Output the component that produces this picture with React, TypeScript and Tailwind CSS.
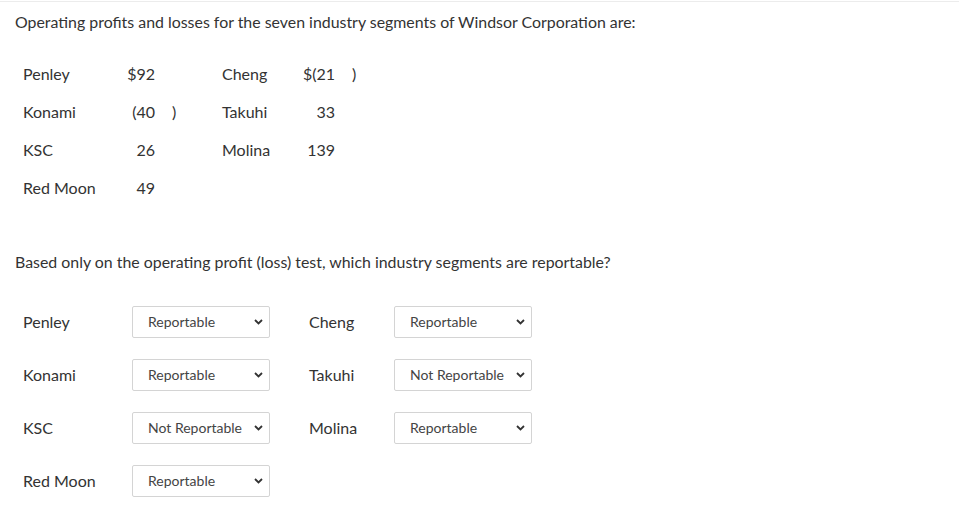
import React from 'react'

const font = { fontFamily: 'Lato, "Open Sans", sans-serif' }

type Row = { name: string; value: string; paren?: boolean }

const left: Row[] = [
  { name: 'Penley', value: '$92' },
  { name: 'Konami', value: '(40', paren: true },
  { name: 'KSC', value: '26' },
  { name: 'Red Moon', value: '49' },
]

const right: (Row | null)[] = [
  { name: 'Cheng', value: '$(21', paren: true },
  { name: 'Takuhi', value: '33' },
  { name: 'Molina', value: '139' },
  null,
]

function Chevron() {
  return (
    <svg className="w-[9px] h-[6px]" viewBox="0 0 9 6" fill="none">
      <path d="M1 1l3.5 3.5L8 1" stroke="#333" strokeWidth={1.8} />
    </svg>
  )
}

function FakeSelect({ value }: { value: string }) {
  return (
    <div className="relative w-[138px] h-[32px] border border-[#d4d4d4] rounded-[2px] bg-white flex items-center pl-[15px] pb-px text-[14px] text-[#444]">
      <span>{value}</span>
      <span className="absolute right-[6px] top-1/2 -translate-y-1/2 flex">
        <Chevron />
      </span>
    </div>
  )
}

const answers: [string, string, string | null, string | null][] = [
  ['Penley', 'Reportable', 'Cheng', 'Reportable'],
  ['Konami', 'Reportable', 'Takuhi', 'Not Reportable'],
  ['KSC', 'Not Reportable', 'Molina', 'Reportable'],
  ['Red Moon', 'Reportable', null, null],
]

export default function App() {
  return (
    <div className="w-[959px] h-[531px] bg-white text-[#333] overflow-hidden" style={font}>
      <div className="mt-px border-t border-[#ececec]" />
      <p className="pl-[15px] pt-[8px] text-[15.9px] leading-[24px]">
        Operating profits and losses for the seven industry segments of Windsor Corporation are:
      </p>

      {/* figures */}
      <table className="mt-[21px] ml-[23px] text-[16px] border-collapse">
        <tbody>
          {left.map((l, i) => {
            const r = right[i]
            return (
              <tr key={l.name} className="h-[38px]">
                <td className="w-[100px] p-0">{l.name}</td>
                <td className="w-[32px] p-0 text-right">{l.value}</td>
                <td className="w-[67px] p-0 pl-[17px]">{l.paren ? ')' : ''}</td>
                <td className="w-[78px] p-0">{r ? r.name : ''}</td>
                <td className="w-[35px] p-0 text-right">{r ? r.value : ''}</td>
                <td className="w-[30px] p-0 pl-[17px]">{r && r.paren ? ')' : ''}</td>
              </tr>
            )
          })}
        </tbody>
      </table>

      <p className="pl-[15px] mt-[43px] text-[15.9px] leading-[24px]">
        Based only on the operating profit (loss) test, which industry segments are reportable?
      </p>

      {/* answers */}
      <div className="mt-[32px] ml-[23px] flex flex-col gap-[21px] text-[16px]">
        {answers.map(([a, av, b, bv]) => (
          <div key={a} className="flex items-center">
            <span className="w-[109px]">{a}</span>
            <FakeSelect value={av} />
            {b && (
              <>
                <span className="ml-[39px] w-[85px]">{b}</span>
                <FakeSelect value={bv as string} />
              </>
            )}
          </div>
        ))}
      </div>
    </div>
  )
}
